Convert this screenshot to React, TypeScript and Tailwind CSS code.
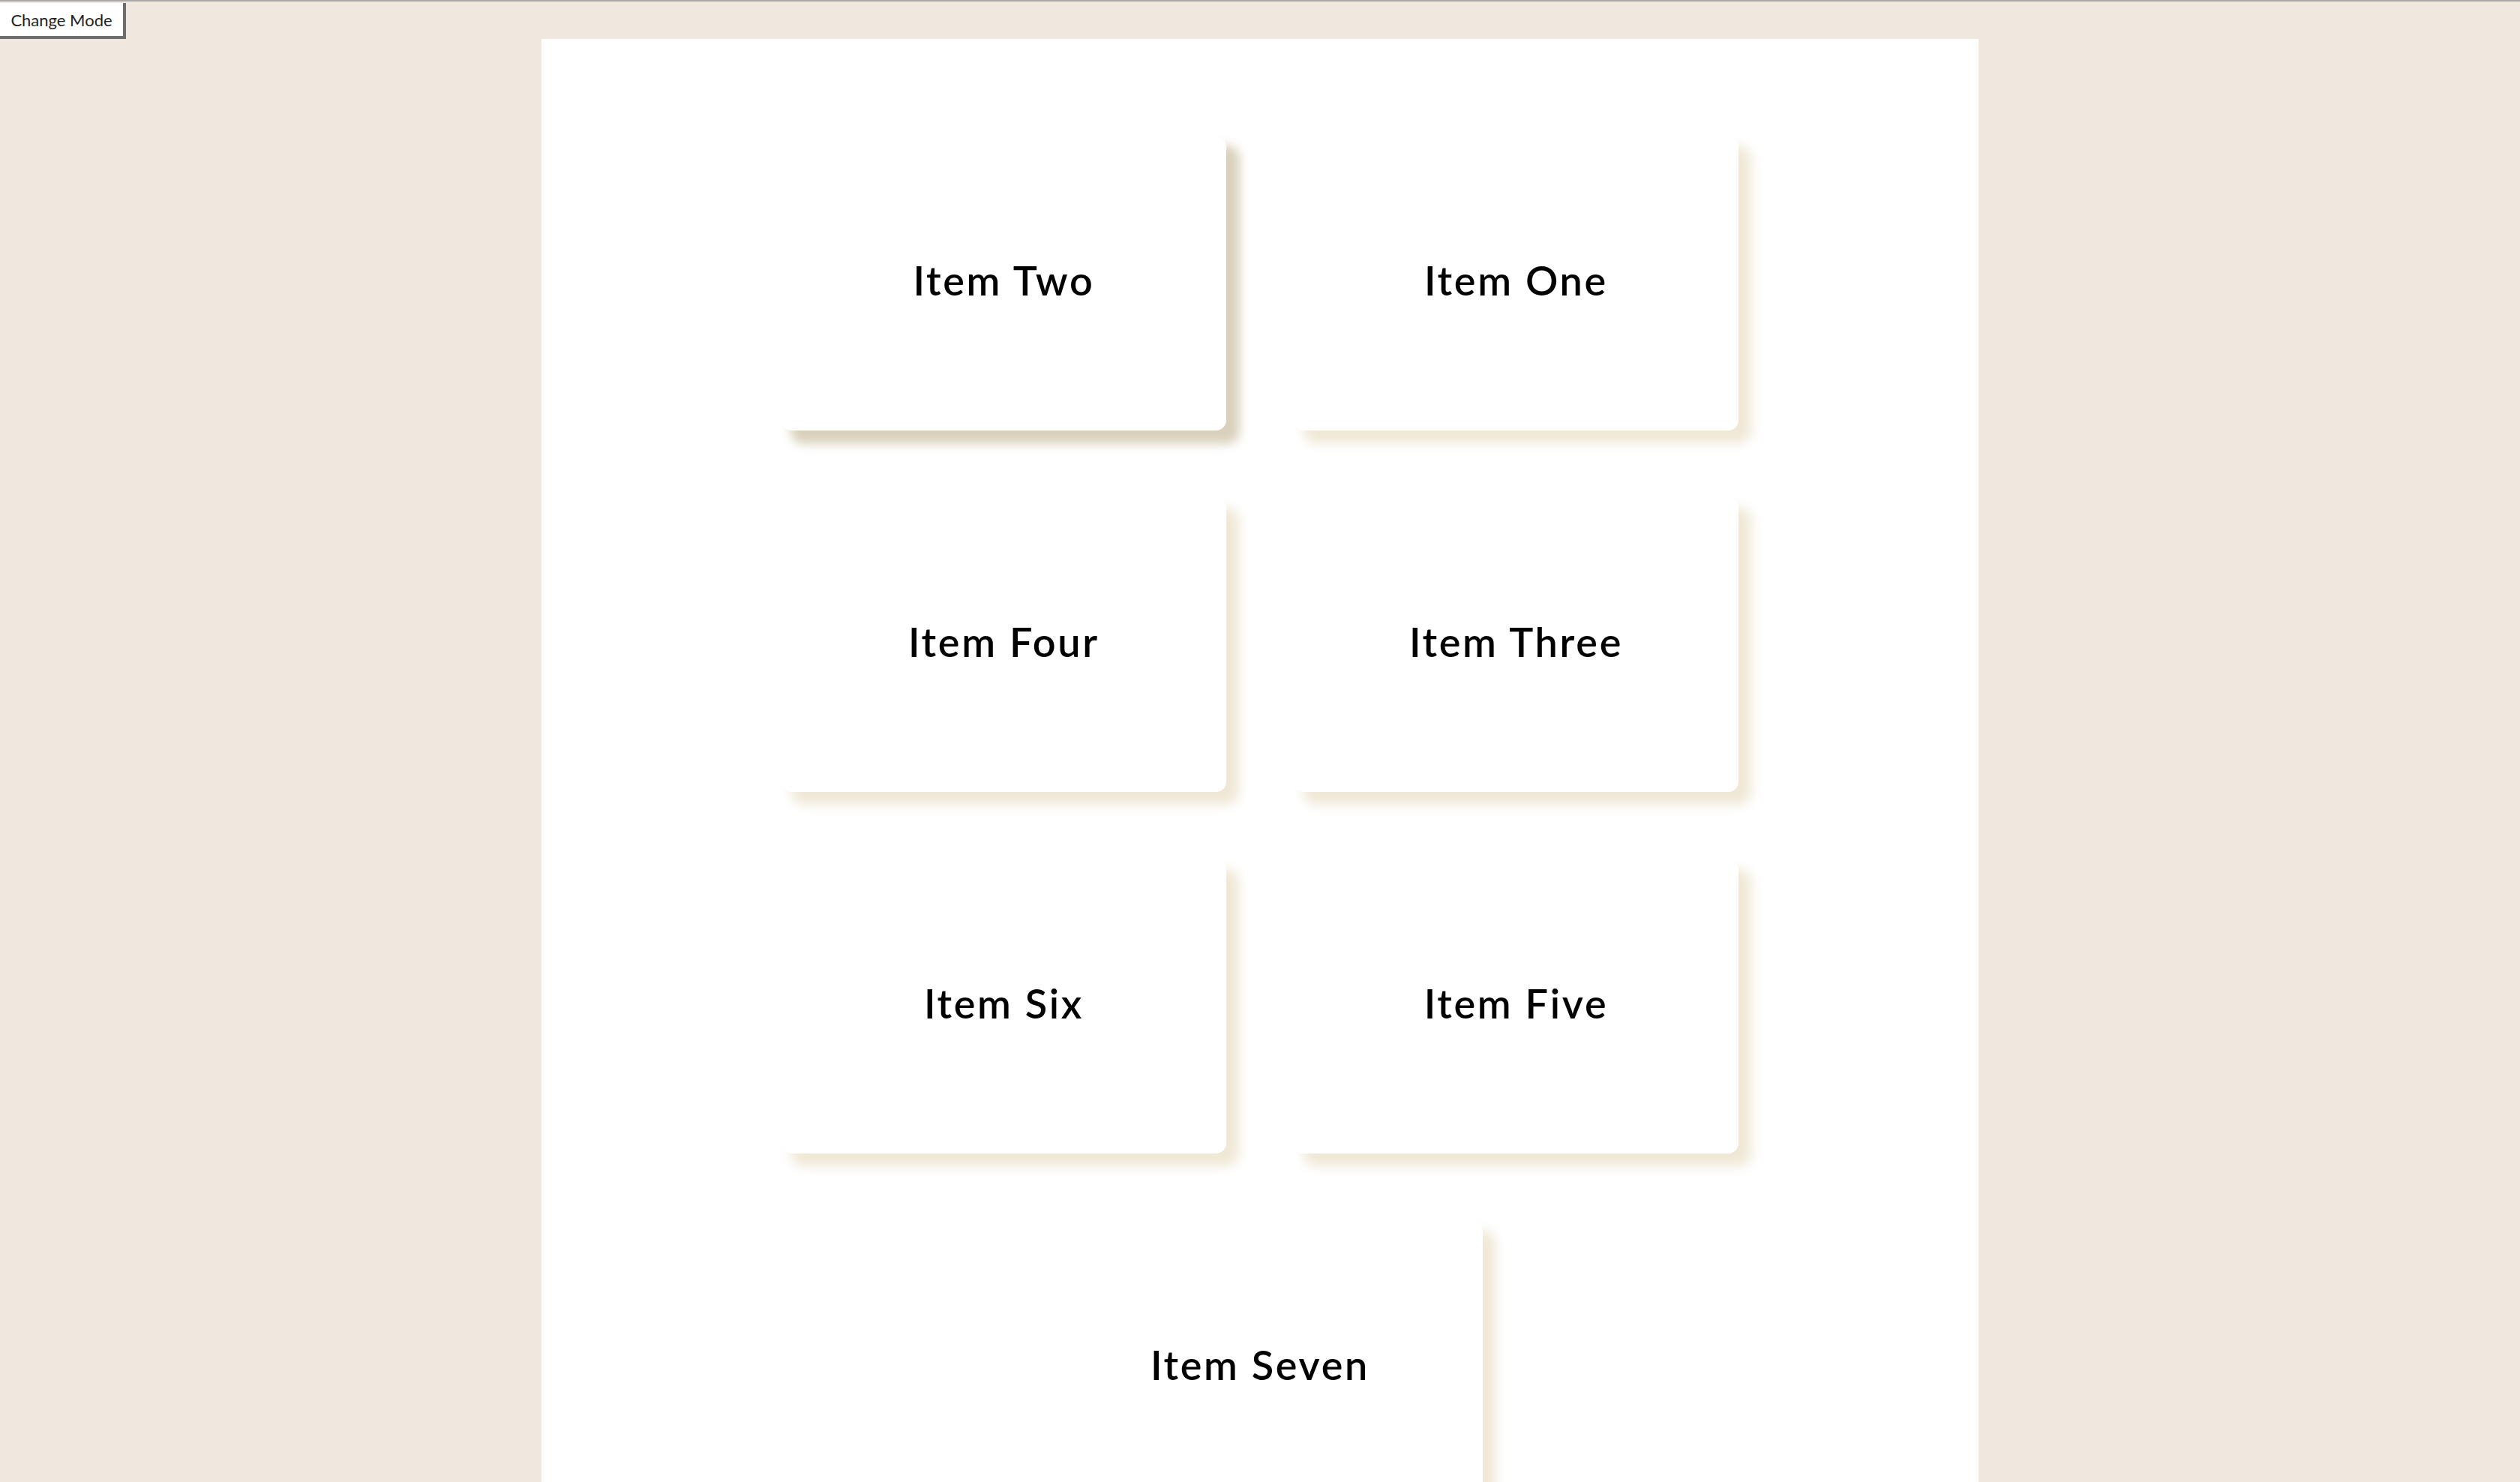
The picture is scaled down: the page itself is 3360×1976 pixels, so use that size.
const items = [
  { id: 2, label: 'Item Two', active: true },
  { id: 1, label: 'Item One' },
  { id: 4, label: 'Item Four' },
  { id: 3, label: 'Item Three' },
  { id: 6, label: 'Item Six' },
  { id: 5, label: 'Item Five' },
];

function Card({ label, active }: { label: string; active?: boolean }) {
  return (
    <div
      className={`flex h-[392px] w-[593px] items-center justify-center rounded-[14px] bg-white ${
        active
          ? 'shadow-[15px_15px_14px_3px_#dad1bc]'
          : 'shadow-[15px_15px_16px_2px_#f0e8d6]'
      }`}
    >
      <span className="-mt-[10px] text-[54px] font-semibold tracking-[0.05em] text-black">{label}</span>
    </div>
  );
}

export default function App() {
  return (
    <div
      className="min-h-screen border-t-2 border-[#a8a8a8] bg-[#f0e7df] pt-[2px]"
      style={{ fontFamily: 'Lato, "Noto Sans", sans-serif' }}
    >
      <button className="block h-[48px] w-[168px] border-b-[4px] border-r-[4px] border-[#6e6e6e] bg-white text-[22px] text-[#222]">
        Change Mode
      </button>
      <div className="mx-auto min-h-[1924px] w-[1916px] bg-white pt-[130px] pb-[130px]">
        <div className="mx-auto grid w-[1276px] grid-cols-2 gap-[90px]">
          {items.map((it) => (
            <Card key={it.id} label={it.label} active={it.active} />
          ))}
          <div className="col-span-2 flex justify-center">
            <Card label="Item Seven" />
          </div>
        </div>
      </div>
    </div>
  );
}
